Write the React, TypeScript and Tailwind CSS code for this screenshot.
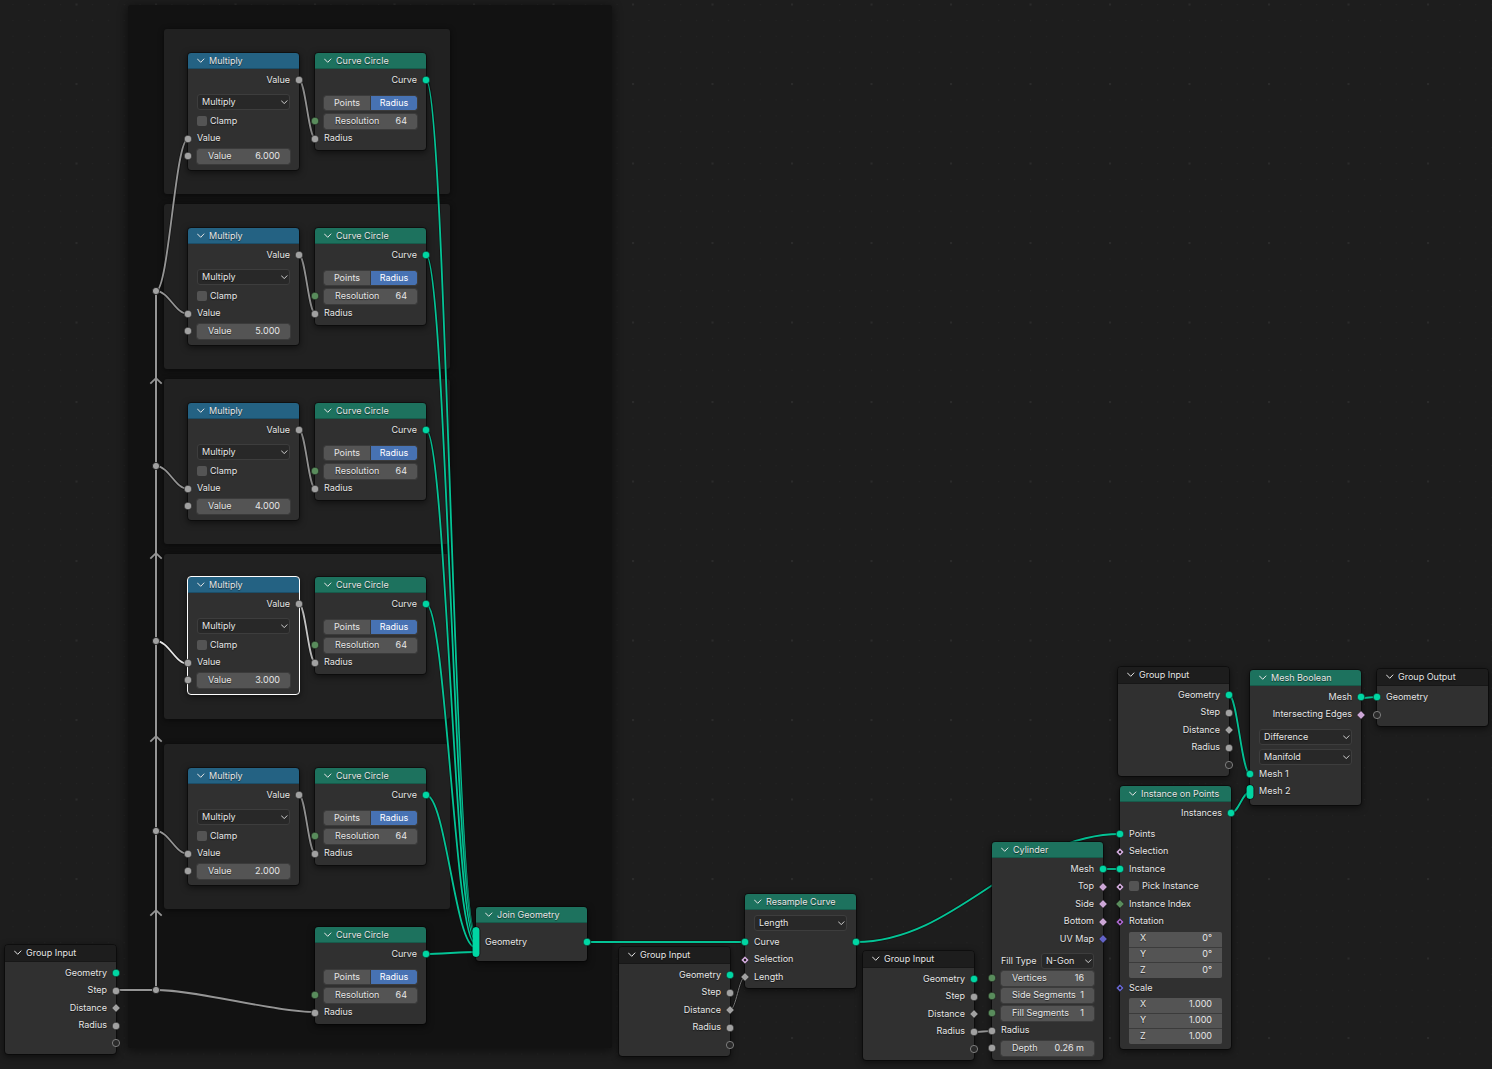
import { Fragment, useId, type ReactNode } from 'react';
import clsx from 'clsx';

type Shape = 'circle' | 'diamond' | 'ring' | 'dot-diamond' | 'tall' | 'multi';

type Socket = { shape?: Shape; color?: string };

const GEOMETRY: Socket = { color: '#00d6a3' };
const FLOAT: Socket = { color: '#a1a1a1' };
const FLOAT_FIELD: Socket = { color: '#a1a1a1', shape: 'diamond' };
const INT: Socket = { color: '#598c5c' };
const INT_FIELD: Socket = { color: '#598c5c', shape: 'diamond' };
const BOOL: Socket = { color: '#cca6d6', shape: 'diamond' };
const BOOL_FIELD: Socket = { color: '#cca6d6', shape: 'dot-diamond' };
const VECTOR: Socket = { color: '#6363c7', shape: 'diamond' };
const VECTOR_FIELD: Socket = { color: '#6363c7', shape: 'dot-diamond' };
const ROTATION: Socket = { color: '#a663c7', shape: 'dot-diamond' };
const VIRTUAL: Socket = { shape: 'ring' };

const SocketIcon = ({ socket, side }: { socket: Socket; side: 'left' | 'right' }) => {
	const { shape = 'circle', color } = socket;
	const place = clsx('absolute top-1/2 -translate-y-1/2', side === 'left' ? 'left-0 -translate-x-1/2' : 'right-0 translate-x-1/2');

	if (shape === 'tall' || shape === 'multi') {
		return (
			<span
				className={clsx(place, 'w-[7px] rounded-full bg-[#00d6a3] outline outline-black/40', shape === 'tall' ? 'h-[30px]' : 'h-[14px]')}
			/>
		);
	}

	return (
		<svg className={clsx(place, 'size-[10px]')} viewBox="0 0 10 10">
			{shape === 'circle' && <circle cx="5" cy="5" r="3.8" fill={color} stroke="#141414" strokeWidth="0.6" />}
			{shape === 'ring' && <circle cx="5" cy="5" r="3.6" fill="#2a2a2a" stroke="#868686" strokeWidth="0.9" />}
			{shape === 'diamond' && <path d="M5 0.8 9.2 5 5 9.2 0.8 5Z" fill={color} stroke="#141414" strokeWidth="0.5" />}
			{shape === 'dot-diamond' && (
				<Fragment>
					<path d="M5 1 9 5 5 9 1 5Z" fill={color} stroke="#141414" strokeWidth="0.5" />
					<circle cx="5" cy="5" r="1.2" fill="#1c1c1c" />
				</Fragment>
			)}
		</svg>
	);
};

const Chevron = ({ className }: { className?: string }) => (
	<svg className={className} viewBox="0 0 8 8" fill="none" stroke="currentColor">
		<path d="M0.2 1.7 3.7 5.3 7.2 1.7" />
	</svg>
);

const Rows = ({ children }: { children: ReactNode }) => <div className="flex flex-col">{children}</div>;

type RowProps = { input?: Socket; output?: Socket; children?: ReactNode };

// Rows sit on a 17.5px pitch, so every second one is a pixel shorter.
const Row = ({ input, output, children }: RowProps) => (
	<div className={clsx('relative flex h-[18px] items-center px-[9px] even:h-[17px] even:pb-px', output && !input && 'justify-end')}>
		{input && <SocketIcon socket={input} side="left" />}
		{children}
		{output && <SocketIcon socket={output} side="right" />}
	</div>
);

const Field = ({ label, value }: { label: string; value: string }) => {
	const id = useId();

	return (
		<div className="flex h-[15px] w-full items-center justify-between rounded-[2px] bg-[#545454] pr-[10px] pl-[11px] outline outline-[#3b3b3b]">
			<label className="shrink-0 whitespace-nowrap" htmlFor={id}>
				{label}
			</label>
			<input className="w-0 min-w-0 flex-1 bg-transparent text-right outline-none" defaultValue={value} id={id} />
		</div>
	);
};

const Select = ({ label, value }: { label: string; value: string }) => (
	<div className="relative w-full">
		<select
			aria-label={label}
			className="block h-4 w-full appearance-none rounded-[3px] border border-[#3d3d3d] bg-[#282828] pl-1 outline-none [text-shadow:inherit]"
			defaultValue={value}
		>
			<option>{value}</option>
		</select>
		<Chevron className="pointer-events-none absolute top-[5px] right-[2px] size-[7px]" />
	</div>
);

const Checkbox = ({ label }: { label: string }) => (
	<label className="flex items-center gap-[3px]">
		<input className="size-[10px] appearance-none rounded-[2px] bg-[#545454]" type="checkbox" />
		{label}
	</label>
);

const VectorField = ({ label, values }: { label: string; values: string[] }) => (
	<div className="mx-[9px] grid h-[46px] grid-rows-3 gap-px overflow-hidden rounded-[2px] bg-[#3b3b3b]">
		{['X', 'Y', 'Z'].map((axis, index) => (
			<label className="flex items-center justify-between bg-[#545454] pr-[10px] pb-[2px] pl-[11px]" key={axis}>
				{axis}
				<input
					aria-label={`${label} ${axis}`}
					className="w-12 bg-transparent text-right outline-none"
					defaultValue={values[index]}
				/>
			</label>
		))}
	</div>
);

type NodeProps = { x: number; y: number; title: string; tone?: 'math' | 'geometry' | 'group'; selected?: boolean; className?: string; children: ReactNode };

const Node = ({ x, y, title, tone = 'geometry', selected, className, children }: NodeProps) => (
	<section
		className={clsx(
			'absolute w-[111px] rounded-[3px] bg-[#303030] shadow-[0_2px_6px_1px_rgba(0,0,0,0.5)] outline',
			selected ? 'outline-white' : 'outline-black/40',
			className,
		)}
		style={{ left: x, top: y }}
	>
		<header
			className={clsx(
				'flex items-center gap-1 rounded-t-[3px] border-b border-black/20 pl-[9px]',
				tone === 'math' && 'h-4 bg-[#246283]',
				tone === 'geometry' && 'h-4 bg-[#1d725e]',
				tone === 'group' && 'h-[17px] bg-[#1d1d1d]',
			)}
		>
			<button aria-label={`Collapse ${title}`} type="button">
				<Chevron className="size-2" />
			</button>
			<h2>{title}</h2>
		</header>
		<div className="pt-[2px]">{children}</div>
	</section>
);

const MultiplyNode = ({ y, value, selected }: { y: number; value: string; selected?: boolean }) => (
	<Node className="pb-[5px]" selected={selected} title="Multiply" tone="math" x={188} y={y}>
		<Rows>
			<Row output={FLOAT}>Value</Row>
		</Rows>
		<div className="mt-[5px] mb-[2px] px-[9px]">
			<Select label="Operation" value="Multiply" />
		</div>
		<Rows>
			<Row>
				<Checkbox label="Clamp" />
			</Row>
			<Row input={FLOAT}>Value</Row>
			<Row input={FLOAT}>
				<Field label="Value" value={value} />
			</Row>
		</Rows>
	</Node>
);

const CurveCircleNode = ({ y }: { y: number }) => (
	<Node className="pb-[3px]" title="Curve Circle" x={315} y={y}>
		<Rows>
			<Row output={GEOMETRY}>Curve</Row>
		</Rows>
		<div className="mx-[9px] mt-[7px] mb-[2px] grid h-[14px] grid-cols-2 gap-px overflow-hidden rounded-[2px] bg-[#3b3b3b] outline outline-[#3b3b3b]">
			<button className="bg-[#545454]" type="button">
				Points
			</button>
			<button className="bg-[#4772b3] text-white" type="button">
				Radius
			</button>
		</div>
		<Rows>
			<Row input={INT}>
				<Field label="Resolution" value="64" />
			</Row>
			<Row input={FLOAT}>Radius</Row>
		</Rows>
	</Node>
);

const GroupInputNode = ({ x, y }: { x: number; y: number }) => (
	<Node className="pb-[2px]" title="Group Input" tone="group" x={x} y={y}>
		<Rows>
			<Row output={GEOMETRY}>Geometry</Row>
			<Row output={FLOAT}>Step</Row>
			<Row output={FLOAT_FIELD}>Distance</Row>
			<Row output={FLOAT}>Radius</Row>
			<Row output={VIRTUAL} />
		</Rows>
	</Node>
);

const GREEN = '#04c496';
const GRAY = '#959595';

type Link = { from: [number, number]; to: [number, number]; color: string; width?: number };

const rings = [
	{ y: 53, value: '6.000', frame: 29 },
	{ y: 228, value: '5.000', frame: 204 },
	{ y: 403, value: '4.000', frame: 379 },
	{ y: 577, value: '3.000', frame: 554, selected: true },
	{ y: 768, value: '2.000', frame: 744 },
];

const reroutes = [291, 466, 641, 831, 990];

const arrows = [378, 553, 736, 910];

const links: Link[] = [
	...rings.map((ring): Link => ({ from: [299, ring.y + 27], to: [315, ring.y + 85], color: ring.selected ? '#c8c8c8' : GRAY })),
	...rings.map((ring, index): Link => ({ from: [426, ring.y + 27], to: [475, 931 + index * 4], color: GREEN })),
	{ from: [426, 954], to: [475, 952], color: GREEN },
	{ from: [156, 291], to: [188, 139], color: GRAY },
	{ from: [156, 291], to: [188, 314], color: GRAY },
	{ from: [156, 466], to: [188, 489], color: GRAY },
	{ from: [156, 641], to: [188, 664], color: '#e6e6e6' },
	{ from: [156, 831], to: [188, 854], color: GRAY },
	{ from: [116, 990], to: [156, 990], color: GRAY },
	{ from: [156, 990], to: [315, 1012], color: GRAY },
	{ from: [588, 942], to: [745, 942], color: GREEN },
	{ from: [730, 1010], to: [745, 977], color: '#7c7c7c', width: 1 },
	{ from: [856, 942], to: [1120, 834], color: GREEN },
	{ from: [974, 1032], to: [992, 1031], color: GRAY },
	{ from: [1103, 869], to: [1120, 869], color: GREEN },
	{ from: [1231, 813], to: [1250, 792], color: GREEN },
	{ from: [1229, 695], to: [1250, 774], color: GREEN },
	{ from: [1361, 698], to: [1377, 697], color: GREEN },
];

// Flat links get shorter handles so that they stay close to a straight line.
const linkPath = ({ from: [x1, y1], to: [x2, y2] }: Link) => {
	const dx = x2 - x1;
	const handle = dx * Math.min(0.4, 0.2 + (0.45 * Math.abs(y2 - y1)) / dx);
	return `M${x1} ${y1}C${x1 + handle} ${y1} ${x2 - handle} ${y2} ${x2} ${y2}`;
};

const Grid = () => (
	<svg className="absolute inset-0 size-full">
		<defs>
			<pattern id="minor" width="15.9" height="15.9" patternUnits="userSpaceOnUse" x="-3.5" y="4">
				<rect width="1" height="1" fill="#242424" />
			</pattern>
			<pattern id="major" width="79.5" height="79.5" patternUnits="userSpaceOnUse" x="-4" y="3.5">
				<rect width="2" height="2" fill="#2b2b2b" />
			</pattern>
		</defs>
		<rect width="100%" height="100%" fill="url(#minor)" />
		<rect width="100%" height="100%" fill="url(#major)" />
	</svg>
);

const Links = () => (
	<svg className="pointer-events-none absolute inset-0 size-full" fill="none">
		<path d="M156 990V291" stroke="#0c0c0c" strokeOpacity="0.6" strokeWidth="4" />
		<path d="M156 990V291" stroke={GRAY} strokeWidth="2" />
		{arrows.map((y) => (
			<path d={`M150.3 ${y + 5.6}L156 ${y + 0.2}L161.7 ${y + 5.6}`} key={y} stroke={GRAY} strokeWidth="1.8" />
		))}
		{links.map((link, index) => (
			<Fragment key={index}>
				<path d={linkPath(link)} stroke="#0c0c0c" strokeOpacity="0.5" strokeWidth={(link.width ?? 1.8) + 1.6} />
				<path d={linkPath(link)} stroke={link.color} strokeWidth={link.width ?? 1.8} />
			</Fragment>
		))}
		{reroutes.map((y) => (
			<circle cx="156" cy={y} fill="#a1a1a1" key={y} r="3.6" stroke="#141414" strokeWidth="0.8" />
		))}
	</svg>
);

const App = () => (
	<main className="relative min-h-screen w-full overflow-hidden bg-[#1d1d1d] font-['Inter',sans-serif] text-[9px] leading-3 text-[#e6e6e6] [text-shadow:0_1px_1px_rgba(0,0,0,0.6)]">
		<Grid />

		<div className="absolute top-[5px] left-[128px] h-[1043px] w-[484px] rounded-[3px] bg-[#121212] shadow-[0_2px_8px_2px_rgba(0,0,0,0.4)]" />
		{rings.map((ring) => (
			<div
				className="absolute left-[164px] h-[165px] w-[286px] rounded-[3px] bg-[#212121] shadow-[0_1px_5px_1px_rgba(0,0,0,0.4)]"
				key={ring.frame}
				style={{ top: ring.frame }}
			/>
		))}

		<Links />

		{rings.map((ring) => (
			<Fragment key={ring.y}>
				<MultiplyNode selected={ring.selected} value={ring.value} y={ring.y} />
				<CurveCircleNode y={ring.y} />
			</Fragment>
		))}
		<CurveCircleNode y={927} />

		<GroupInputNode x={5} y={945} />

		<Node className="pb-[2px]" title="Join Geometry" x={476} y={907}>
			<div className="py-2">
				<Row input={{ shape: 'tall' }} output={GEOMETRY}>
					Geometry
				</Row>
			</div>
		</Node>

		<GroupInputNode x={619} y={947} />

		<Node className="pb-[2px]" title="Resample Curve" x={745} y={894}>
			<div className="mt-[3px] mb-[2px] px-[9px]">
				<Select label="Mode" value="Length" />
			</div>
			<Rows>
				<Row input={GEOMETRY} output={GEOMETRY}>
					Curve
				</Row>
				<Row input={BOOL_FIELD}>Selection</Row>
				<Row input={FLOAT_FIELD}>Length</Row>
			</Rows>
		</Node>

		<GroupInputNode x={863} y={951} />

		<Node className="pb-[3px]" title="Cylinder" x={992} y={842}>
			<Rows>
				<Row output={GEOMETRY}>Mesh</Row>
				<Row output={BOOL}>Top</Row>
				<Row output={BOOL}>Side</Row>
				<Row output={BOOL}>Bottom</Row>
				<Row output={VECTOR}>UV Map</Row>
			</Rows>
			<div className="mt-[5px] flex items-center justify-between px-[9px]">
				<span>Fill Type</span>
				<div className="w-[53px]">
					<Select label="Fill Type" value="N-Gon" />
				</div>
			</div>
			<Rows>
				<Row input={INT}>
					<Field label="Vertices" value="16" />
				</Row>
				<Row input={INT}>
					<Field label="Side Segments" value="1" />
				</Row>
				<Row input={INT}>
					<Field label="Fill Segments" value="1" />
				</Row>
				<Row input={FLOAT}>Radius</Row>
				<Row input={FLOAT}>
					<Field label="Depth" value="0.26 m" />
				</Row>
			</Rows>
		</Node>

		<GroupInputNode x={1118} y={667} />

		<Node className="pb-[5px]" title="Instance on Points" x={1120} y={786}>
			<Rows>
				<Row output={GEOMETRY}>Instances</Row>
			</Rows>
			<div className="mt-[3px] mb-[2px]">
				<Rows>
					<Row input={GEOMETRY}>Points</Row>
					<Row input={BOOL_FIELD}>Selection</Row>
					<Row input={GEOMETRY}>Instance</Row>
					<Row input={BOOL_FIELD}>
						<Checkbox label="Pick Instance" />
					</Row>
					<Row input={INT_FIELD}>Instance Index</Row>
					<Row input={ROTATION}>Rotation</Row>
				</Rows>
			</div>
			<VectorField label="Rotation" values={['0°', '0°', '0°']} />
			<div className="my-px">
				<Row input={VECTOR_FIELD}>Scale</Row>
			</div>
			<VectorField label="Scale" values={['1.000', '1.000', '1.000']} />
		</Node>

		<Node className="pb-[5px]" title="Mesh Boolean" x={1250} y={670}>
			<Rows>
				<Row output={GEOMETRY}>Mesh</Row>
				<Row output={BOOL}>Intersecting Edges</Row>
			</Rows>
			<div className="mt-[6px] flex flex-col gap-1 px-[9px]">
				<Select label="Operation" value="Difference" />
				<Select label="Solver" value="Manifold" />
			</div>
			<Rows>
				<Row input={GEOMETRY}>Mesh 1</Row>
				<Row input={{ shape: 'multi' }}>Mesh 2</Row>
			</Rows>
		</Node>

		<Node className="pb-[3px]" title="Group Output" tone="group" x={1377} y={669}>
			<Rows>
				<Row input={GEOMETRY}>Geometry</Row>
				<Row input={VIRTUAL} />
			</Rows>
		</Node>
	</main>
);

export default App;
